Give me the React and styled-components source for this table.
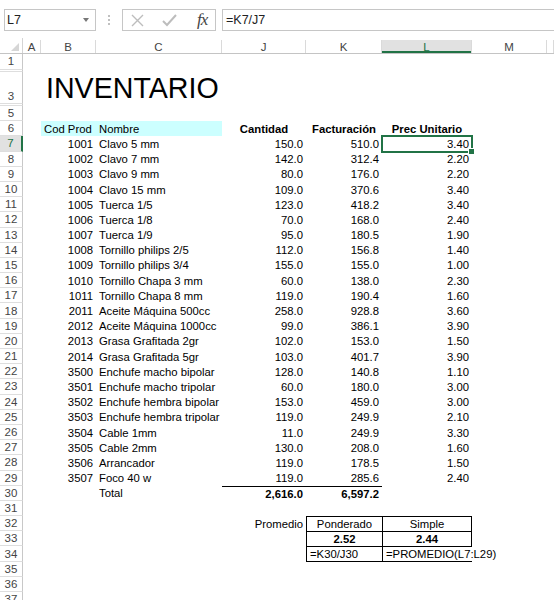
import React from "react";
import styled, { createGlobalStyle } from "styled-components";

const GlobalStyle = createGlobalStyle`
  body {
    margin: 0;
    background: #fff;
    font-family: "Liberation Sans", Arial, sans-serif;
  }
`;

const COLS = "23px 18px 55px 126px 84px 76px 90px 75px 1fr";
const GREEN = "#217346";

const Page = styled.div`
  width: 554px;
  height: 600px;
  overflow: hidden;
  background: #fff;
  color: #000;
`;

const FormulaBar = styled.div`
  height: 38px;
  display: flex;
  align-items: flex-start;
  padding: 9px 0 0 4px;
  box-sizing: border-box;
`;

const NameBox = styled.div`
  width: 92px;
  height: 22px;
  border: 1px solid #c6c6c6;
  box-sizing: border-box;
  display: flex;
  align-items: center;
  justify-content: space-between;
  padding: 0 6px 0 2px;
  font-size: 12.5px;
  color: #222;
`;

const DropArrow = styled.span`
  width: 0;
  height: 0;
  border-left: 3.5px solid transparent;
  border-right: 3.5px solid transparent;
  border-top: 4px solid #777;
`;

const Dots = styled.div`
  width: 26px;
  height: 22px;
  display: flex;
  flex-direction: column;
  align-items: center;
  justify-content: center;
  gap: 2px;
  & span {
    width: 2px;
    height: 2px;
    background: #c0c0c0;
  }
`;

const IconBox = styled.div`
  width: 94px;
  height: 22px;
  border: 1px solid #c6c6c6;
  box-sizing: border-box;
  display: flex;
  align-items: center;
  padding-left: 8px;
  gap: 18px;
`;

const Fx = styled.span`
  font-family: "Liberation Serif", "Times New Roman", serif;
  font-style: italic;
  font-size: 17px;
  color: #444;
  letter-spacing: -1px;
  margin-left: 2px;
`;

const FormulaInput = styled.div`
  flex: 1;
  height: 22px;
  margin-left: 6px;
  margin-right: -2px;
  border: 1px solid #c6c6c6;
  box-sizing: border-box;
  display: flex;
  align-items: center;
  padding-left: 3px;
  font-size: 12.5px;
  color: #222;
`;

const HeaderRow = styled.div`
  display: grid;
  grid-template-columns: ${COLS};
  height: 16px;
  border-bottom: 1px solid #c4c4c4;
  box-sizing: border-box;
`;

const Corner = styled.div`
  position: relative;
  border-right: 1px solid #d4d4d4;
  &::after {
    content: "";
    position: absolute;
    right: 3px;
    bottom: 2px;
    width: 0;
    height: 0;
    border-left: 8px solid transparent;
    border-bottom: 8px solid #d6d6d6;
  }
`;

const ColHead = styled.div`
  display: flex;
  align-items: center;
  justify-content: center;
  font-size: 11.5px;
  color: ${(p) => (p.$sel ? GREEN : "#444")};
  background: ${(p) => (p.$sel ? "#e1e1e1" : "#fff")};
  border-right: 1px solid #dadada;
  box-shadow: ${(p) => (p.$sel ? `inset 0 -2px 0 ${GREEN}` : "none")};
  margin-top: 2px;
`;

const Row = styled.div`
  display: grid;
  grid-template-columns: ${COLS};
  height: ${(p) => p.$h}px;
`;

const RowHead = styled.div`
  display: flex;
  align-items: ${(p) => (p.$bottom ? "flex-end" : "center")};
  justify-content: center;
  font-size: 11.5px;
  color: ${(p) => (p.$sel ? GREEN : "#444")};
  background: ${(p) => (p.$sel ? "#e1e1e1" : "#fff")};
  border-right: ${(p) => (p.$sel ? `2px solid ${GREEN}` : "1px solid #c8c8c8")};
  border-bottom: 1px solid #dedede;
  box-sizing: border-box;
  overflow: hidden;
  padding-bottom: ${(p) => (p.$bottom ? "1px" : "0")};
`;

const border = (on) => (on ? "1px solid #000" : "none");

const Cell = styled.div`
  position: relative;
  display: flex;
  align-items: center;
  justify-content: ${(p) =>
    p.$align === "right" ? "flex-end" : p.$align === "center" ? "center" : "flex-start"};
  padding: 0 3px;
  box-sizing: border-box;
  white-space: nowrap;
  font-size: 11.3px;
  font-weight: ${(p) => (p.$bold ? "bold" : "normal")};
  background: ${(p) => p.$bg || "transparent"};
  border-top: ${(p) => border(p.$bt)};
  border-left: ${(p) => border(p.$bl)};
  border-right: ${(p) => border(p.$br)};
  border-bottom: ${(p) => border(p.$bb)};
  min-width: 0;
  outline: ${(p) => (p.$sel ? `2px solid ${GREEN}` : "none")};
  outline-offset: -1px;
  z-index: ${(p) => (p.$sel ? 1 : 0)};
  &::after {
    content: "";
    display: ${(p) => (p.$sel ? "block" : "none")};
    position: absolute;
    right: -3px;
    bottom: -3px;
    width: 5px;
    height: 5px;
    background: ${GREEN};
    border: 1px solid #fff;
  }
`;

const Title = styled(Cell)`
  font-size: 28.6px;
  align-items: flex-end;
  line-height: 28px;
  padding-bottom: 2px;
  padding-left: 5px;
  overflow: visible;
`;

const COL_KEYS = ["A", "B", "C", "J", "K", "L", "M", "N"];

function SheetRow({ n, h = 15.2, sel, bottom, cells = {} }) {
  return (
    <Row $h={h}>
      <RowHead $sel={sel} $bottom={bottom}>{n}</RowHead>
      {COL_KEYS.map((k) => {
        const c = cells[k];
        if (!c) return <Cell key={k} />;
        return (
          <Cell
            key={k}
            $align={c.align}
            $bold={c.bold}
            $bg={c.bg}
            $bt={c.bt}
            $bl={c.bl}
            $br={c.br}
            $bb={c.bb}
            $sel={c.sel}
          >
            {c.text}
          </Cell>
        );
      })}
    </Row>
  );
}

const items = [
  [1001, "Clavo 5 mm", "150.0", "510.0", "3.40"],
  [1002, "Clavo 7 mm", "142.0", "312.4", "2.20"],
  [1003, "Clavo 9 mm", "80.0", "176.0", "2.20"],
  [1004, "Clavo 15 mm", "109.0", "370.6", "3.40"],
  [1005, "Tuerca 1/5", "123.0", "418.2", "3.40"],
  [1006, "Tuerca 1/8", "70.0", "168.0", "2.40"],
  [1007, "Tuerca 1/9", "95.0", "180.5", "1.90"],
  [1008, "Tornillo philips 2/5", "112.0", "156.8", "1.40"],
  [1009, "Tornillo philips 3/4", "155.0", "155.0", "1.00"],
  [1010, "Tornillo Chapa 3 mm", "60.0", "138.0", "2.30"],
  [1011, "Tornillo Chapa 8 mm", "119.0", "190.4", "1.60"],
  [2011, "Aceite Máquina 500cc", "258.0", "928.8", "3.60"],
  [2012, "Aceite Máquina 1000cc", "99.0", "386.1", "3.90"],
  [2013, "Grasa Grafitada 2gr", "102.0", "153.0", "1.50"],
  [2014, "Grasa Grafitada 5gr", "103.0", "401.7", "3.90"],
  [3500, "Enchufe macho bipolar", "128.0", "140.8", "1.10"],
  [3501, "Enchufe macho tripolar", "60.0", "180.0", "3.00"],
  [3502, "Enchufe hembra bipolar", "153.0", "459.0", "3.00"],
  [3503, "Enchufe hembra tripolar", "119.0", "249.9", "2.10"],
  [3504, "Cable 1mm", "11.0", "249.9", "3.30"],
  [3505, "Cable 2mm", "130.0", "208.0", "1.60"],
  [3506, "Arrancador", "119.0", "178.5", "1.50"],
  [3507, "Foco 40 w", "119.0", "285.6", "2.40"],
];

const CYAN = "#ccffff";

export default function App() {
  return (
    <Page>
      <GlobalStyle />
      <FormulaBar>
        <NameBox>
          L7
          <DropArrow />
        </NameBox>
        <Dots>
          <span />
          <span />
          <span />
        </Dots>
        <IconBox>
          <svg width="13" height="13" viewBox="0 0 13 13">
            <path d="M1 1 L12 12 M12 1 L1 12" stroke="#bdbdbd" strokeWidth="1.4" fill="none" />
          </svg>
          <svg width="15" height="13" viewBox="0 0 15 13">
            <path d="M1 7 L5 11 L14 1" stroke="#bdbdbd" strokeWidth="2" fill="none" />
          </svg>
          <Fx>fx</Fx>
        </IconBox>
        <FormulaInput>=K7/J7</FormulaInput>
      </FormulaBar>

      <HeaderRow>
        <Corner />
        {COL_KEYS.map((k) => (
          <ColHead key={k} $sel={k === "L"}>
            {k === "N" ? "" : k}
          </ColHead>
        ))}
      </HeaderRow>

      <SheetRow n={1} h={15.5} />
      <SheetRow n="" h={2} />
      <Row $h={32.5}>
        <RowHead $bottom>3</RowHead>
        <Cell />
        <Title>INVENTARIO</Title>
        <Cell />
        <Cell />
        <Cell />
        <Cell />
        <Cell />
        <Cell />
      </Row>
      <SheetRow n="" h={2} />
      <SheetRow n={5} />
      <SheetRow
        n={6}
        cells={{
          B: { text: "Cod Prod", bg: CYAN },
          C: { text: "Nombre", bg: CYAN },
          J: { text: "Cantidad", bold: true, align: "center" },
          K: { text: "Facturación", bold: true, align: "center" },
          L: { text: "Prec Unitario", bold: true, align: "center" },
        }}
      />
      {items.map(([code, name, qty, fact, price], i) => (
        <SheetRow
          key={code}
          n={7 + i}
          sel={i === 0}
          cells={{
            B: { text: code, align: "right" },
            C: { text: name },
            J: { text: qty, align: "right" },
            K: { text: fact, align: "right" },
            L: { text: price, align: "right", sel: i === 0 },
          }}
        />
      ))}
      <SheetRow
        n={30}
        cells={{
          C: { text: "Total" },
          J: { text: "2,616.0", bold: true, align: "right", bt: true },
          K: { text: "6,597.2", bold: true, align: "right", bt: true },
        }}
      />
      <SheetRow n={31} />
      <SheetRow
        n={32}
        cells={{
          J: { text: "Promedio", align: "right" },
          K: { text: "Ponderado", align: "center", bt: true, bl: true },
          L: { text: "Simple", align: "center", bt: true, bl: true, br: true },
        }}
      />
      <SheetRow
        n={33}
        cells={{
          K: { text: "2.52", align: "center", bold: true, bt: true, bl: true },
          L: { text: "2.44", align: "center", bold: true, bt: true, bl: true, br: true },
        }}
      />
      <SheetRow
        n={34}
        cells={{
          K: { text: "=K30/J30", bt: true, bl: true, bb: true },
          L: { text: "=PROMEDIO(L7:L29)", bt: true, bl: true, bb: true },
        }}
      />
      <SheetRow n={35} />
      <SheetRow n={36} />
      <SheetRow n={37} />
    </Page>
  );
}
